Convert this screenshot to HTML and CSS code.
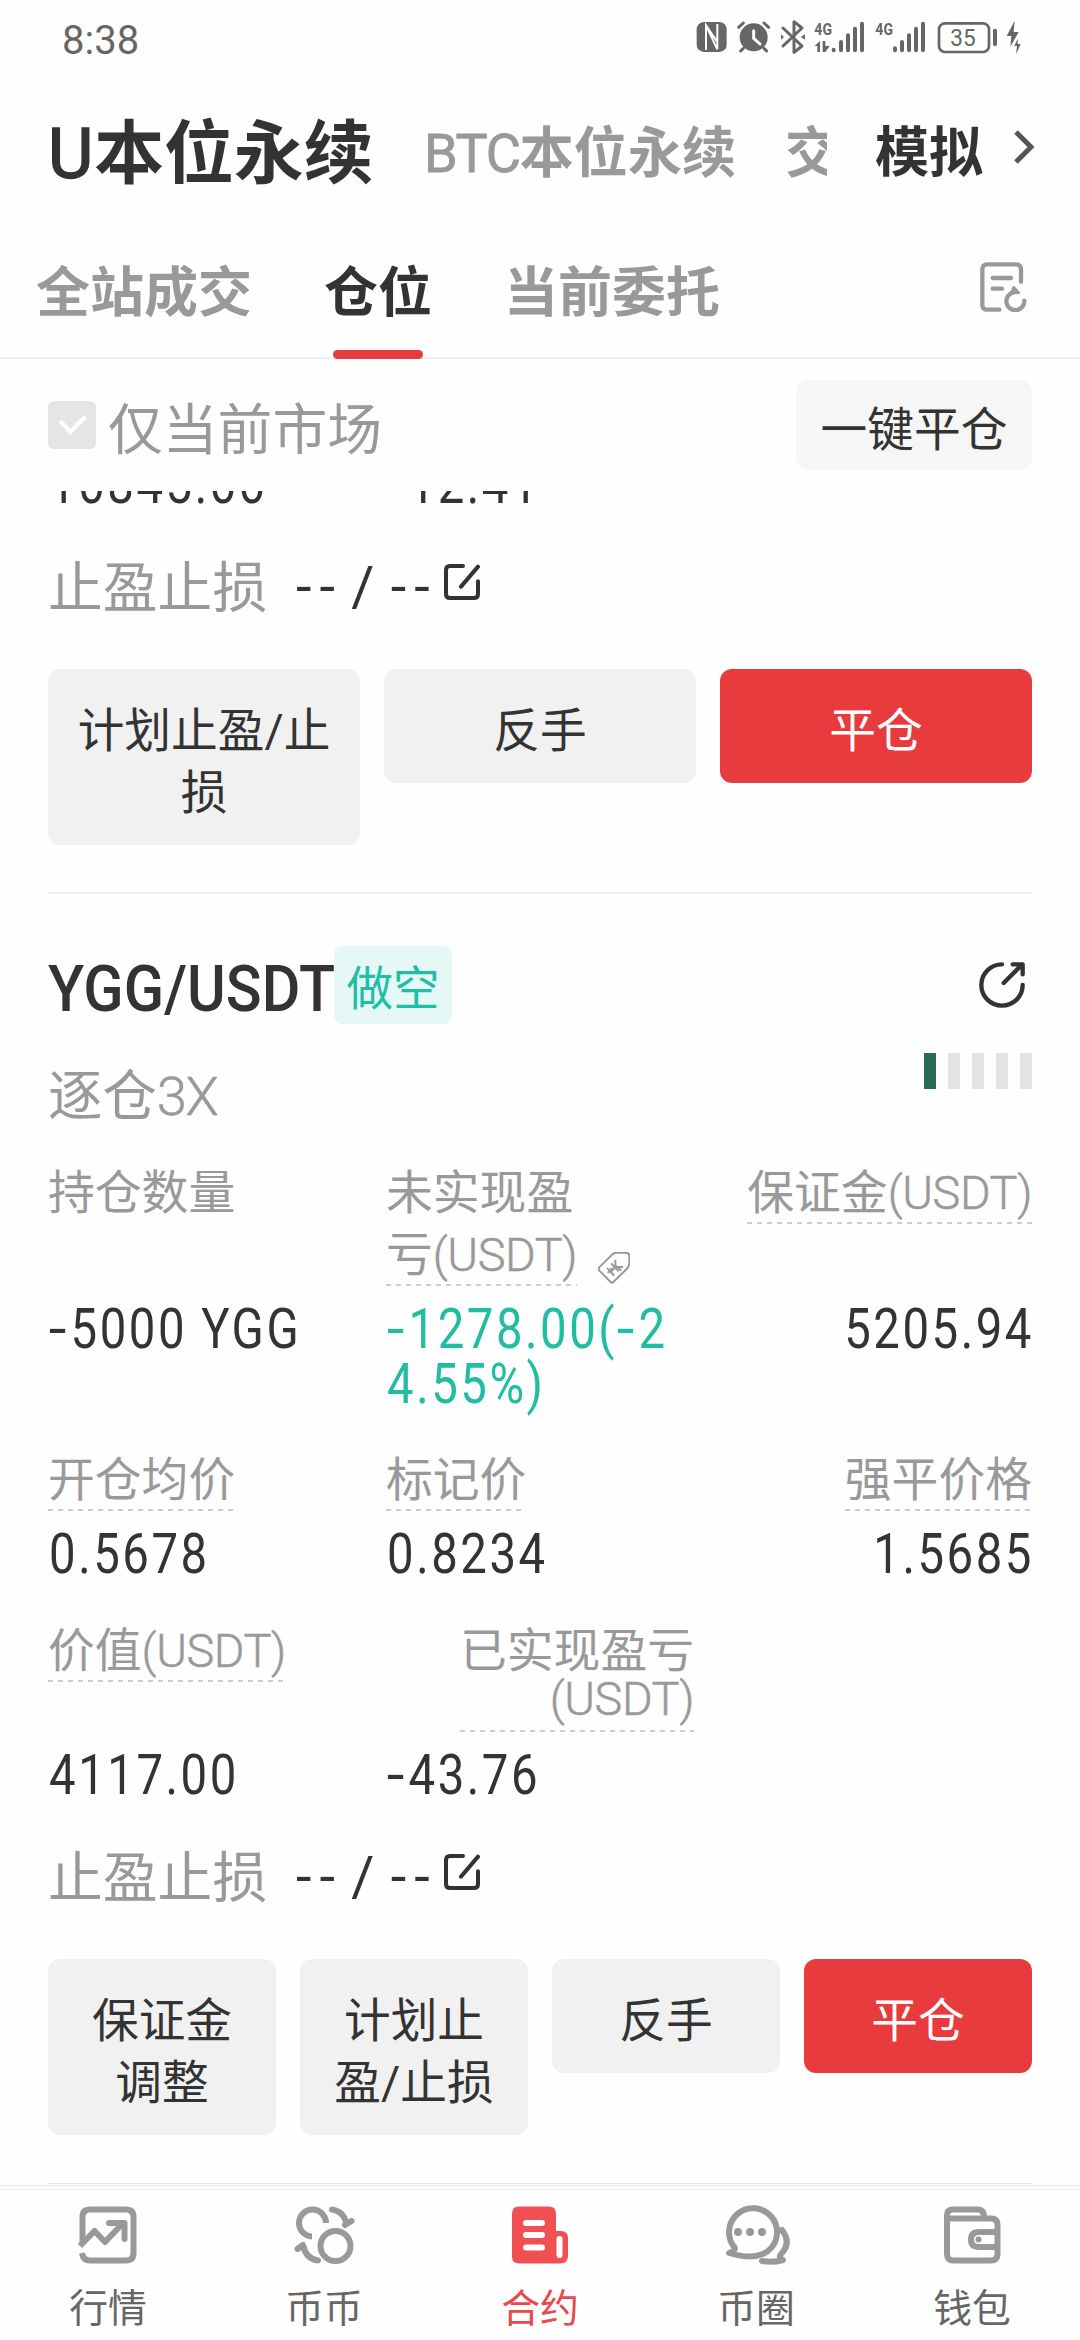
FILE: index.html
```html
<!DOCTYPE html>
<html lang="zh-CN">
<head>
<meta charset="utf-8">
<title>合约仓位</title>
<link rel="stylesheet" href="styles.css">
</head>
<body>
<div class="screen">
  <div class="status">
    <span class="time">8:38</span>
    <svg class="status-icons" viewBox="0 0 1080 240" fill="#666" stroke="none">
      <rect x="50" y="66" width="90" height="90" rx="22"/>
      <path d="M78 150V76L112 126V72M78 76L112 148V72" fill="none" stroke="#fff" stroke-width="6"/>
      <circle cx="221" cy="112" r="42"/>
      <path d="M176 82L190 69M266 82L252 69M190 145L182 153M252 145L260 153" stroke="#666" stroke-width="9" stroke-linecap="round"/>
      <path d="M221 92V115L240 132" fill="none" stroke="#fff" stroke-width="9" stroke-linecap="round"/>
      <path d="M309 84L366 138L342 157V65L366 84L309 138" fill="none" stroke="#666" stroke-width="9" stroke-linejoin="round" stroke-linecap="round"/>
      <path d="M303 103L312 111L303 119ZM375 103L362 111L375 119Z"/>
      <text class="net" x="403" y="106" textLength="53" lengthAdjust="spacingAndGlyphs">4G</text>
      <path d="M404 138L420 123V156H412V138ZM428 123H436V138L449 138L436 156H428Z"/>
      <path d="M461 149V151M483 126V151M504 106V151M525 86V151M546 71V151" stroke="#666" stroke-width="12" stroke-linecap="round"/>
      <text class="net" x="586" y="106" textLength="53" lengthAdjust="spacingAndGlyphs">4G</text>
      <path d="M645 145V151M666 126V151M687 106V151M708 86V151M729 71V151" stroke="#666" stroke-width="12" stroke-linecap="round"/>
      <rect x="777" y="70" width="150" height="86" rx="18" fill="none" stroke="#666" stroke-width="8"/>
      <path d="M945 92V133" stroke="#666" stroke-width="12" stroke-linecap="round"/>
      <text class="level" x="811" y="139" textLength="76" lengthAdjust="spacingAndGlyphs">35</text>
      <path d="M1004 62L980 108H994L991 140L1016 96H1001ZM1013 116L1003 138H1011L1008 163L1022 132H1013Z"/>
    </svg>
  </div>

  <div class="markets">
    <span class="market active"><span class="lat">U</span>本位永续</span>
    <span class="market btc"><span class="lat">BTC</span>本位永续</span>
    <span class="market cut">交</span>
    <span class="demo">模拟</span>
    <svg class="chevron" viewBox="0 0 22 36" fill="none" stroke="#555" stroke-width="5"><path d="M3 2L18 17L3 32"/></svg>
  </div>

  <div class="tabs">
    <span class="tab">全站成交</span>
    <span class="tab active">仓位</span>
    <span class="tab">当前委托</span>
    <svg class="history" viewBox="0 0 144 156" fill="none" stroke="#999" stroke-width="13" stroke-linecap="round">
      <path d="M58 149H22Q7 149 7 134V29Q7 13 22 13H107Q123 13 123 29V65M38 54H93M38 86H66"/>
      <path d="M101 97A27 27 0 1 0 133 122"/><path d="M101 82L116 98L94 99Z" stroke-width="8" fill="#999" stroke-linejoin="round"/>
    </svg>
  </div>

  <div class="filter">
    <svg class="check" viewBox="0 0 48 48"><rect width="48" height="48" rx="6" fill="#e5e5e5"/><path d="M13 21L22.500 31L36 17" fill="none" stroke="#fff" stroke-width="4" stroke-linecap="round"/></svg>
    <span class="only">仅当前市场</span>
    <span class="close-all">一键平仓</span>
  </div>

  <div class="list">
    <div class="item first">
      <div class="grid peek">
        <span class="value">10845.00</span>
        <span class="value"><i class="minus">-</i>12.41</span>
      </div>
      <div class="tpsl">
        <span class="tpsl-label">止盈止损</span><span class="tpsl-value">-- / --</span>
        <svg class="edit" viewBox="0 0 108 108" fill="none" stroke="#333" stroke-width="12" stroke-linecap="round" stroke-linejoin="round"><path d="M57 6H18Q6 6 6 18V90Q6 102 18 102H90Q102 102 102 90V52M51 68L102 8"/></svg>
      </div>
      <div class="actions">
        <span class="btn">计划止盈/止<br>损</span>
        <span class="btn">反手</span>
        <span class="btn danger">平仓</span>
      </div>
    </div>

    <div class="item second">
      <div class="head">
        <span class="pair"><span>YGG/USDT</span></span>
        <span class="side">做空</span>
        <svg class="share" viewBox="0 0 138 138" fill="none" stroke="#333" stroke-width="13" stroke-linecap="round" stroke-linejoin="round"><path d="M69 7A62 62 0 1 0 131 69M74 63L130 7M101 7H131V37"/></svg>
      </div>
      <div class="sub">
        <span class="lever">逐仓<span class="thin">3X</span></span>
        <span class="risk"><i class="on"></i><i></i><i></i><i></i><i></i></span>
      </div>

      <div class="grid labels r1">
        <span><span class="label">持仓数量</span></span>
        <span class="pnl"><span>未实现盈<br><span class="label dash">亏<span class="thin">(USDT)</span></span></span>
          <svg class="tag" viewBox="0 0 96 96" fill="none" stroke="#999" stroke-width="6" stroke-linejoin="round" stroke-linecap="round"><path d="M3 47L43 7Q50 2 60 2H83Q93 2 94 11V32Q94 43 86 51L46 90Q42 94 38 90L4 56Q0 51 3 47ZM29 50L47 69M41 36L60 56M52 26V45H73M52 45L38 60M31 61L41 50M57 43L68 54"/></svg>
        </span>
        <span class="right"><span class="label dash">保证金<span class="thin">(USDT)</span></span></span>
      </div>
      <div class="grid values">
        <span class="value"><i class="minus">-</i>5000 YGG</span>
        <span class="value up"><i class="minus">-</i>1278.00(<i class="minus">-</i>2<br>4.55%)</span>
        <span class="value end">5205.94</span>
      </div>

      <div class="grid labels r2">
        <span><span class="label dash">开仓均价</span></span>
        <span><span class="label dash">标记价</span></span>
        <span class="right"><span class="label dash">强平价格</span></span>
      </div>
      <div class="grid values">
        <span class="value">0.5678</span>
        <span class="value">0.8234</span>
        <span class="value end">1.5685</span>
      </div>

      <div class="grid labels r3">
        <span><span class="label dash">价值<span class="thin">(USDT)</span></span></span>
        <span class="right"><span class="label dash tight">已实现盈亏<br><span class="thin">(USDT)</span></span></span>
      </div>
      <div class="grid values v3">
        <span class="value">4117.00</span>
        <span class="value"><i class="minus">-</i>43.76</span>
      </div>

      <div class="tpsl">
        <span class="tpsl-label">止盈止损</span><span class="tpsl-value">-- / --</span>
        <svg class="edit" viewBox="0 0 108 108" fill="none" stroke="#333" stroke-width="12" stroke-linecap="round" stroke-linejoin="round"><path d="M57 6H18Q6 6 6 18V90Q6 102 18 102H90Q102 102 102 90V52M51 68L102 8"/></svg>
      </div>
      <div class="actions">
        <span class="btn">保证金<br>调整</span>
        <span class="btn">计划止<br>盈/止损</span>
        <span class="btn">反手</span>
        <span class="btn danger">平仓</span>
      </div>
    </div>
  </div>

  <div class="nav">
    <div class="nav-item">
      <svg viewBox="0 0 72 64" fill="none" stroke="#999" stroke-width="6"><path d="M10.500 40V14Q10.500 6.500 18 6.500H54Q61.500 6.500 61.500 14V50Q61.500 57.500 54 57.500H18Q11 57.500 10 50"/><path d="M8 43L22.500 28L33 39L52 19" stroke-linejoin="round"/><path d="M37 20H52.500V36" stroke-linecap="round" stroke-linejoin="round"/></svg>
      <span>行情</span>
    </div>
    <div class="nav-item">
      <svg viewBox="0 0 72 64" fill="none" stroke="#999" stroke-width="6" stroke-linecap="round"><path d="M38 20A13.500 13.500 0 1 0 24 33.500" stroke-linecap="butt"/><circle cx="47.500" cy="43" r="15"/><path d="M44 6.500Q55 8 58.500 20M57 22L63.500 18M30 57.500Q18 56 15 42M9.500 46L15 42"/></svg>
      <span>币币</span>
    </div>
    <div class="nav-item current">
      <svg viewBox="0 0 72 64" fill="none"><path d="M15 3.500H45Q52 3.500 52 10.500V28H57Q64 28 64 35V53Q64 60.500 56 60.500H15Q8 60.500 8 53.500V10.500Q8 3.500 15 3.500Z" fill="#f05052"/><path d="M22 20H38M22 32H38M22 44.500H38M55.500 36V52" stroke="#fff" stroke-width="6" stroke-linecap="round"/></svg>
      <span>合约</span>
    </div>
    <div class="nav-item">
      <svg viewBox="0 0 72 64" fill="none" stroke="#999" stroke-width="6" stroke-linecap="round" stroke-linejoin="round"><path d="M9 50Q15 48 15 45A24 24 0 1 1 48 48Q35 58 9 50ZM62 27Q72 40 61 51Q58 55 63 57Q52 60 42 58"/><g fill="#999" stroke="none"><circle cx="18" cy="29" r="4"/><circle cx="30" cy="29" r="4"/><circle cx="42" cy="29" r="4"/></g></svg>
      <span>币圈</span>
    </div>
    <div class="nav-item">
      <svg viewBox="0 0 72 64" fill="none" stroke="#999" stroke-width="6"><path d="M11 15V12Q11 6.500 17 6.500H41Q48 6.500 48 13V15M11 15.500H55Q61.500 15.500 61.500 22V51Q61.500 57.500 55 57.500H17.500Q11 57.500 11 51V13"/><path d="M61 29H43Q35 29 35 36.500Q35 44 43 44H61"/><circle cx="42.500" cy="36.500" r="3" fill="#999" stroke="none"/></svg>
      <span>钱包</span>
    </div>
  </div>
</div>
</body>
</html>
```

FILE: styles.css
```css
* { box-sizing: border-box; }

body {
  margin: 0;
  background: #fefefe;
  color: #333;
  font-family: Roboto, "Noto Sans CJK SC", sans-serif;
}

svg { display: block; flex: none; }
i { font-style: normal; }

.screen {
  width: 1080px;
  height: 2340px;
  overflow: hidden;
  display: flex;
  flex-direction: column;
}

.screen > * { flex: none; }

/* status bar */
.status {
  height: 80px;
  padding: 0 40px 0 62px;
  display: flex;
  justify-content: space-between;
}
.time { font-size: 40px; line-height: 82px; color: #666; }
.status-icons { width: 360px; height: 80px; }
.net { font-size: 52px; font-weight: 700; }
.level { font-size: 70px; }

/* market switcher */
.markets {
  height: 142px;
  padding: 6px 0 0 48px;
  display: flex;
  align-items: center;
  font-weight: 700;
  white-space: nowrap;
}
.market { font-size: 54.200px; line-height: 80px; color: #999; }
.market .lat { font-weight: 400; -webkit-text-stroke: .8px; }
.market.active { width: 376px; font-size: 69.800px; color: #333; }
.market.active .lat { letter-spacing: 1px; -webkit-text-stroke: 1.500px; }
.btc { width: 361px; }
.btc .lat { letter-spacing: -1.500px; }
.cut { width: 42px; overflow: hidden; }
.demo { margin-left: 48px; font-size: 54px; line-height: 76px; margin-top: -1px; }
.chevron { width: 22px; height: 36px; margin: -12px 0 0 30px; }

/* list tabs */
.tabs {
  height: 137px;
  padding: 0 48px 0 36px;
  display: flex;
  gap: 72px;
  border-bottom: 2px solid #eee;
  font-size: 54px;
  font-weight: 700;
  line-height: 143px;
  color: #999;
}
.tab.active {
  height: 137px;
  color: #333;
  position: relative;
}
.tab.active::after {
  content: "";
  position: absolute;
  left: 9px;
  bottom: 0;
  width: 90px;
  height: 9px;
  border-radius: 5px;
  background: #e63c40;
}
.history { width: 48px; height: 52px; margin: 38px 4px 0 auto; }

/* filter */
.filter {
  height: 132px;
  padding: 21px 48px 0;
  display: flex;
}
.check { width: 48px; height: 48px; margin-top: 21px; }
.only { margin-left: 12px; font-size: 54.800px; line-height: 101px; color: #999; }
.close-all {
  width: 236px;
  height: 90px;
  margin-left: auto;
  border-radius: 12px;
  background: #f6f6f6;
  font-size: 46.700px;
  line-height: 100px;
  text-align: center;
}

/* positions */
.list { height: 1694px; padding: 0 48px; overflow: hidden; }
.item.first { padding-bottom: 47px; border-bottom: 2px solid #eee; }
.item.second { padding-bottom: 48px; border-bottom: 1px solid #e8e8e8; }

.grid { display: grid; grid-template-columns: 338px 308px 338px; align-items: start; }
.peek { margin-top: -36px; padding-bottom: 1px; }

.value {
  font-size: 56px;
  line-height: 55px;
  letter-spacing: 3px;
  white-space: nowrap;
  transform: translate(1px, 2px) scaleX(.845);
  transform-origin: left center;
}
.value.end { text-align: right; transform-origin: right center; transform: translate(2px, 2px) scaleX(.845); }
.value.up { color: #20bda3; }
.minus { display: inline-block; transform: scaleX(1.350); margin: 0 4px 0 3px; }

.tpsl {
  height: 60px;
  margin-top: 44px;
  display: flex;
  align-items: center;
  font-size: 54.800px;
  line-height: 60px;
}
.tpsl-label { width: 248px; color: #999; padding-top: 5px; }
.tpsl-value { width: 148px; font-size: 56px; padding-top: 4px; letter-spacing: 8px; word-spacing: -13.500px; white-space: nowrap; }
.edit { width: 36px; height: 36px; margin-top: -6px; }

.actions { display: flex; align-items: flex-start; gap: 24px; margin-top: 54px; }
.btn {
  flex: 1 1 0;
  padding: 31px 0 21px;
  border-radius: 12px;
  background: #f1f1f1;
  font-size: 46.700px;
  line-height: 62px;
  text-align: center;
  white-space: nowrap;
}
.btn.danger { background: #e83b3e; color: #fff; }

.head { display: flex; align-items: center; height: 78px; margin-top: 52px; }
.pair { width: 286px; font-size: 64px; font-weight: 500; line-height: 78px; white-space: nowrap; }
.pair span { display: block; padding-top: 10px; transform: scaleX(.925); transform-origin: left center; }
.side {
  width: 118px;
  height: 78px;
  border-radius: 8px;
  background: #e5f8f6;
  color: #1fbfa5;
  font-size: 46.500px;
  line-height: 87px;
  text-align: center;
}
.share { width: 46px; height: 46px; margin: 0 7px 0 auto; }

.sub { display: flex; justify-content: space-between; height: 72px; margin-top: 29px; }
.lever { align-self: flex-end; font-size: 54.400px; line-height: 56px; color: #999; }
.thin { font-weight: 300; letter-spacing: -.4px; -webkit-text-stroke: .5px; }
.lever .thin { letter-spacing: -1.500px; }
.risk { display: flex; gap: 12px; }
.risk i { width: 12px; height: 36px; background: #e3e3e3; }
.risk .on { background: #286b59; }

.labels { padding-top: 2px; font-size: 46.800px; line-height: 62px; color: #999; }
.r1 { margin-top: 35px; }
.r2 { margin-top: 37px; }
.r3 { margin-top: 38px; }
.label { display: inline-block; vertical-align: top; }
.dash {
  background: repeating-linear-gradient(90deg, #ccc 0 5px, transparent 5px 10px) left bottom / 100% 2px no-repeat;
}
.tight { padding: 7px 0 9px; line-height: 48px; }
.right { text-align: right; }
.pnl { display: flex; align-items: flex-end; gap: 21px; }
.tag { width: 32px; height: 32px; margin-bottom: 2px; }
.values { margin-top: 14px; }

/* bottom navigation */
.nav {
  height: 155px;
  border-top: 1px solid #e8e8e8;
  display: flex;
  background: linear-gradient(#eee, #eee) 0 3px / 100% 1px no-repeat;
}
.nav-item {
  flex: 1;
  padding-top: 17px;
  display: flex;
  flex-direction: column;
  align-items: center;
  font-size: 38.800px;
  line-height: 50px;
  color: #666;
}
.nav-item svg { width: 72px; height: 64px; overflow: visible; }
.nav-item span { margin-top: 17px; }
.current { color: #e9484d; }
```
